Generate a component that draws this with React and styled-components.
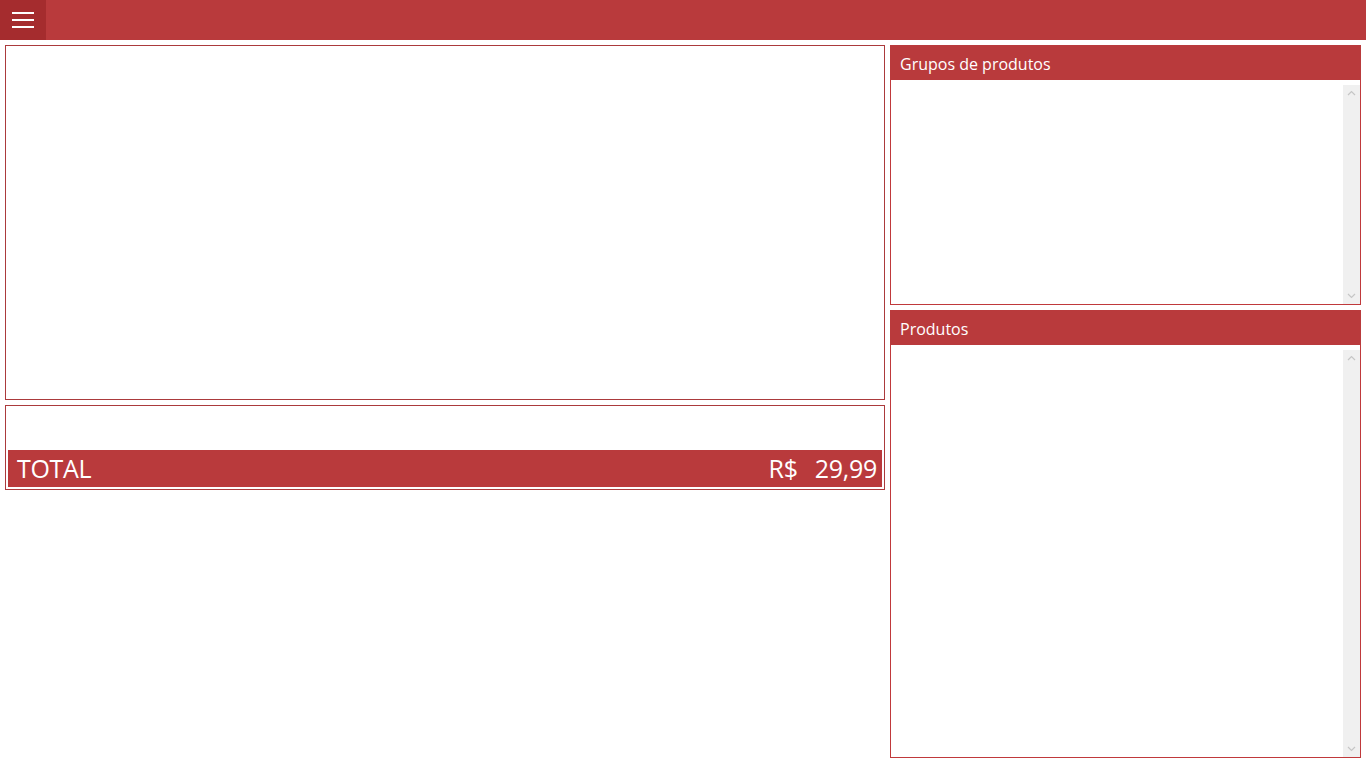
import React from "react";
import styled, { createGlobalStyle } from "styled-components";

const GlobalStyle = createGlobalStyle`
  html, body {
    margin: 0;
    padding: 0;
    background: #ffffff;
    font-family: "Open Sans", "Noto Sans", sans-serif;
  }
`;

const Page = styled.div`
  width: 1366px;
  height: 768px;
  display: flex;
  flex-direction: column;
  overflow: hidden;
`;

const TopBar = styled.div`
  height: 40px;
  background: #b93a3c;
  display: flex;
  align-items: stretch;
`;

const MenuButton = styled.button`
  width: 46px;
  border: none;
  padding: 0;
  background: #a52c2e;
  display: flex;
  flex-direction: column;
  align-items: center;
  justify-content: center;
  gap: 5px;
  cursor: pointer;
`;

const MenuLine = styled.span`
  display: block;
  width: 22px;
  height: 2px;
  background: #ffffff;
`;

const Main = styled.div`
  display: flex;
  gap: 5px;
  padding: 5px;
`;

const LeftColumn = styled.div`
  width: 880px;
  display: flex;
  flex-direction: column;
  gap: 5px;
`;

const RightColumn = styled.div`
  width: 471px;
  display: flex;
  flex-direction: column;
  gap: 5px;
`;

const Box = styled.div`
  box-sizing: border-box;
  height: ${(p) => p.$h}px;
  border: 1px solid #ab3a3c;
  background: #fff;
`;

const TotalBox = styled(Box)`
  display: flex;
  flex-direction: column;
  justify-content: flex-end;
  padding: 0 2px 2px 2px;
`;

const TotalBar = styled.div`
  height: 37px;
  background: #b93a3c;
  color: #ffffff;
  display: flex;
  align-items: center;
  justify-content: space-between;
  padding: 0 5px 0 9px;
  font-size: 25px;
  line-height: 1;
  letter-spacing: -0.3px;
`;

const Amount = styled.span`
  word-spacing: 11px;
`;

const Panel = styled.div`
  box-sizing: border-box;
  height: ${(p) => p.$h}px;
  border: 1px solid #c0393b;
  display: flex;
  flex-direction: column;
`;

const PanelHeader = styled.div`
  box-sizing: border-box;
  height: 35px;
  margin: -1px -1px 0 -1px;
  background: #b93a3c;
  color: #ffffff;
  font-size: 16px;
  display: flex;
  align-items: center;
  padding: 3px 0 0 10px;
`;

const PanelBody = styled.div`
  flex: 1;
  display: flex;
  padding-top: 5px;
`;

const List = styled.div`
  flex: 1;
`;

const ScrollTrack = styled.div`
  width: 17px;
  background: #f0f0f0;
  display: flex;
  flex-direction: column;
  justify-content: space-between;
  align-items: center;
  padding: 5px 0;
`;

const Chevron = ({ down }) => (
  <svg width="9" height="6" viewBox="0 0 9 6">
    <path
      d={down ? "M1 1 L4.5 4.5 L8 1" : "M1 5 L4.5 1.5 L8 5"}
      fill="none"
      stroke="#c6c6c6"
      strokeWidth="1.2"
    />
  </svg>
);

const ListPanel = ({ title, h }) => (
  <Panel $h={h}>
    <PanelHeader>{title}</PanelHeader>
    <PanelBody>
      <List />
      <ScrollTrack>
        <Chevron />
        <Chevron down />
      </ScrollTrack>
    </PanelBody>
  </Panel>
);

const App = () => {
  return (
    <Page>
      <GlobalStyle />
      <TopBar>
        <MenuButton aria-label="menu">
          <MenuLine />
          <MenuLine />
          <MenuLine />
        </MenuButton>
      </TopBar>
      <Main>
        <LeftColumn>
          <Box $h={355} />
          <TotalBox $h={85}>
            <TotalBar>
              <span>TOTAL</span>
              <Amount>R$ 29,99</Amount>
            </TotalBar>
          </TotalBox>
        </LeftColumn>
        <RightColumn>
          <ListPanel title="Grupos de produtos" h={260} />
          <ListPanel title="Produtos" h={448} />
        </RightColumn>
      </Main>
    </Page>
  );
};

export default App;
